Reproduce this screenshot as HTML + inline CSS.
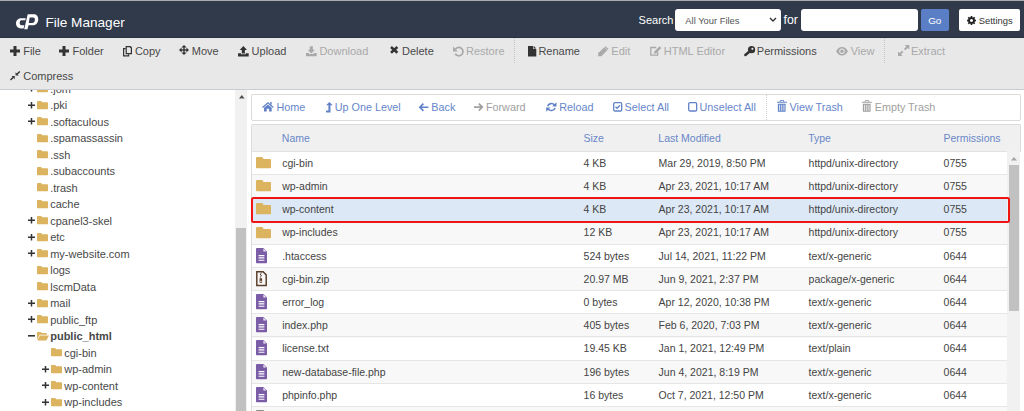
<!DOCTYPE html>
<html><head><meta charset="utf-8">
<style>
*{box-sizing:border-box}
html,body{margin:0;padding:0}
body{width:1024px;height:411px;overflow:hidden;position:relative;background:#fff;font-family:"Liberation Sans",sans-serif;color:#333}
.a{position:absolute}
.t{position:absolute;white-space:nowrap;line-height:1}
.ic{position:absolute;overflow:visible}
#tree{position:absolute;left:0;top:90px;width:235px;height:321px;overflow:hidden}
#tree > *{margin-top:-90px}
</style></head><body>
<div class="a" style="left:0px;top:0px;width:1024px;height:1px;background:#aaabae"></div>
<div class="a" style="left:0px;top:1px;width:1024px;height:37px;background:#303a4b"></div>
<div class="a" style="left:0px;top:37px;width:1024px;height:1px;background:#283041"></div>
<svg class="ic" style="left:12px;top:10px" width="30" height="22" viewBox="0 0 30 22"><path fill="#fff" d="M13.75 8.2L9 8.2C6 8.2 4 10.6 4 13.35C4 16.2 6 18.5 9 18.5L11.6 18.5L12.35 15.3L9.3 15.3C8.2 15.3 7.7 14.2 7.7 12.75C7.7 11.1 8.3 10.2 9.4 10.2L13.3 10.2Z"/><path fill="#fff" fill-rule="evenodd" d="M15.7 4.2L22.2 4.2C24.8 4.2 26.25 6.6 26.25 9.4C26.25 12.8 23.8 15.3 20.5 15.3L16.5 15.3L15.45 19.3L12.2 19.3Z M17.7 7.6L21.3 7.6C22.5 7.6 22.9 8.6 22.9 9.8C22.9 11.7 21.8 13.0 20.2 13.0L16.75 13.0Z"/></svg>
<div class="t" style="left:45.40px;top:16.09px;font-size:13.6px;color:#fff;font-weight:400;">File Manager</div>
<div class="t" style="left:638.60px;top:14.69px;font-size:11.0px;color:#fff;font-weight:400;">Search</div>
<div class="a" style="left:675px;top:9px;width:106px;height:22px;background:#fff;border-radius:3px"></div>
<div class="t" style="left:685.30px;top:16.04px;font-size:9.4px;color:#555;font-weight:400;">All Your Files</div>
<svg class="ic" style="left:768.5px;top:17px" width="8" height="6" viewBox="0 0 8 6"><path d="M1 1 L4 4 L7 1" stroke="#333" stroke-width="1.4" fill="none"/></svg>
<div class="t" style="left:783.60px;top:13.59px;font-size:12.3px;color:#fff;font-weight:400;">for</div>
<div class="a" style="left:801px;top:9px;width:117px;height:22px;background:#fff;border-radius:3px"></div>
<div class="a" style="left:921px;top:9px;width:28px;height:22px;background:#5b7fc6;border-radius:2px"></div>
<div class="t" style="left:928.20px;top:15.82px;font-size:9.9px;color:#fff;font-weight:400;">Go</div>
<div class="a" style="left:959px;top:9px;width:61px;height:22px;background:#fff;border-radius:2px"></div>
<svg class="ic" style="left:967px;top:16px" width="9" height="9" viewBox="0 0 16 16"><path fill="#222" fill-rule="evenodd" d="M6.7 0h2.6l.4 2.1 1.2.5 1.8-1.2 1.9 1.9-1.2 1.8.5 1.2 2.1.4v2.6l-2.1.4-.5 1.2 1.2 1.8-1.9 1.9-1.8-1.2-1.2.5-.4 2.1H6.7l-.4-2.1-1.2-.5-1.8 1.2-1.9-1.9 1.2-1.8-.5-1.2L0 9.3V6.7l2.1-.4.5-1.2-1.2-1.8 1.9-1.9 1.8 1.2 1.2-.5z M8 5.3a2.7 2.7 0 1 0 .01 0z"/></svg>
<div class="t" style="left:978.80px;top:16.24px;font-size:9.4px;color:#333;font-weight:400;">Settings</div>
<div class="a" style="left:0px;top:38px;width:1024px;height:51px;background:#e8e8e8"></div>
<div class="a" style="left:0px;top:89px;width:1024px;height:1px;background:#c8cdd2"></div>
<div class="t" style="left:23.20px;top:46.19px;font-size:11px;color:#484848;font-weight:400;">File</div>
<div class="t" style="left:72.50px;top:46.19px;font-size:11px;color:#484848;font-weight:400;">Folder</div>
<div class="t" style="left:134.90px;top:46.19px;font-size:11px;color:#484848;font-weight:400;">Copy</div>
<div class="t" style="left:191.80px;top:46.19px;font-size:11px;color:#484848;font-weight:400;">Move</div>
<div class="t" style="left:251.60px;top:46.19px;font-size:11px;color:#484848;font-weight:400;">Upload</div>
<div class="t" style="left:319.40px;top:46.19px;font-size:11px;color:#a9a9a9;font-weight:400;">Download</div>
<div class="t" style="left:402.00px;top:46.19px;font-size:11px;color:#484848;font-weight:400;">Delete</div>
<div class="t" style="left:466.00px;top:46.19px;font-size:11px;color:#a9a9a9;font-weight:400;">Restore</div>
<div class="t" style="left:538.40px;top:46.19px;font-size:11px;color:#484848;font-weight:400;">Rename</div>
<div class="t" style="left:611.30px;top:46.19px;font-size:11px;color:#a9a9a9;font-weight:400;">Edit</div>
<div class="t" style="left:663.80px;top:46.19px;font-size:11px;color:#a9a9a9;font-weight:400;">HTML Editor</div>
<div class="t" style="left:756.80px;top:46.19px;font-size:11px;color:#484848;font-weight:400;">Permissions</div>
<div class="t" style="left:850.70px;top:46.19px;font-size:11px;color:#a9a9a9;font-weight:400;">View</div>
<div class="t" style="left:910.90px;top:46.19px;font-size:11px;color:#a9a9a9;font-weight:400;">Extract</div>
<div class="t" style="left:23.20px;top:70.89px;font-size:11px;color:#484848;font-weight:400;">Compress</div>
<div class="a" style="left:514px;top:38px;width:1px;height:25px;border-left:1px dotted #c4c4c4"></div>
<div class="a" style="left:884px;top:38px;width:1px;height:25px;border-left:1px dotted #c4c4c4"></div>
<svg class="ic" style="left:9.7px;top:45.9px" width="10" height="10" viewBox="0 0 10 10"><path fill="#333" d="M3.5 0h3v3.5H10v3H6.5V10h-3V6.5H0v-3h3.5z"/></svg>
<svg class="ic" style="left:59.2px;top:45.9px" width="10" height="10" viewBox="0 0 10 10"><path fill="#333" d="M3.5 0h3v3.5H10v3H6.5V10h-3V6.5H0v-3h3.5z"/></svg>
<svg class="ic" style="left:123px;top:45.5px" width="9" height="10.5" viewBox="0 0 9 10.5"><g fill="none" stroke="#333" stroke-width="1.2"><path d="M2.6 2.6H0.6V9.9H5.6V8.3"/><path d="M3.2 0.6H7L8.4 2V7.7H3.2Z"/></g><path fill="#333" d="M6.6 0.6H8.4V2.4Z"/></svg>
<svg class="ic" style="left:179px;top:45.3px" width="10" height="10" viewBox="0 0 10 10"><g fill="#333"><path d="M5 0L7.6 2.6H2.4Z M5 10L7.6 7.4H2.4Z M0 5L2.6 2.4V7.6Z M10 5L7.4 2.4V7.6Z"/><rect x="4.3" y="2" width="1.4" height="6"/><rect x="2" y="4.3" width="6" height="1.4"/></g></svg>
<svg class="ic" style="left:238.2px;top:45.5px" width="10.7" height="10.5" viewBox="0 0 10.7 10.5"><g fill="#333"><path d="M5.35 0L9 3.9H6.9V7.4H3.8V3.9H1.7Z"/><path d="M0 7.2H3V8.3H7.7V7.2H10.7V10.5H0Z"/></g></svg>
<svg class="ic" style="left:306.2px;top:45.8px" width="10.7" height="10.3" viewBox="0 0 10.7 10.3"><g fill="#a9a9a9"><path d="M5.35 7.6L9 3.7H6.9V0.2H3.8V3.7H1.7Z"/><path d="M0 7H3V8.1H7.7V7H10.7V10.3H0Z"/></g></svg>
<svg class="ic" style="left:389.9px;top:46.2px" width="8.4" height="7.8" viewBox="0 0 8.4 7.8"><path stroke="#333" stroke-width="2.5" d="M1 1L7.4 6.8M7.4 1L1 6.8"/></svg>
<svg class="ic" style="left:453.2px;top:45.5px" width="10.2" height="10.2" viewBox="0 0 10.2 10.2"><path fill="none" stroke="#a9a9a9" stroke-width="1.7" d="M2.4 3.2A4.2 4.2 0 1 1 2.2 7.8"/><path fill="#a9a9a9" d="M0 0.6V5.4H4.8Z"/></svg>
<svg class="ic" style="left:527.9px;top:45.6px" width="8.3" height="10.5" viewBox="0 0 8.3 10.5"><path fill="#333" d="M0 0H5.2V3.1H8.3V10.5H0Z M5.8 0L8.3 2.5H5.8Z"/></svg>
<svg class="ic" style="left:598.2px;top:45.7px" width="10.7" height="10.3" viewBox="0 0 10.7 10.3"><path fill="#a9a9a9" d="M7.6 0.2L10.5 3.1L3.4 10.2H0.2V7Z"/><path stroke="#e8e8e8" stroke-width="0.6" d="M6.6 1.3L9.4 4.1"/></svg>
<svg class="ic" style="left:650px;top:46.2px" width="11.5" height="9.8" viewBox="0 0 11.5 9.8"><path fill="none" stroke="#a9a9a9" stroke-width="1.3" d="M6.2 1.5H0.8V9.1H7.6V5.6"/><path fill="#a9a9a9" d="M9.6 0.2L11.3 1.9L5.8 7.4H4.1V5.7Z"/></svg>
<svg class="ic" style="left:743.9px;top:45.9px" width="11.2" height="10.3" viewBox="0 0 11.2 10.3"><circle cx="7.6" cy="3.7" r="3.6" fill="#333"/><circle cx="8.4" cy="2.8" r="1.1" fill="#e8e8e8"/><path stroke="#333" stroke-width="2.6" stroke-linecap="round" d="M5.5 5.6L1.4 9"/></svg>
<svg class="ic" style="left:836.3px;top:46.6px" width="12" height="8.5" viewBox="0 0 12 8.5"><path fill="#a9a9a9" fill-rule="evenodd" d="M0 4.25C1.6 1.5 3.6 0 6 0S10.4 1.5 12 4.25C10.4 7 8.4 8.5 6 8.5S1.6 7 0 4.25Z M6 1.4A2.85 2.85 0 1 0 6.01 1.4Z"/><circle cx="6" cy="4.25" r="1.7" fill="#a9a9a9"/></svg>
<svg class="ic" style="left:897.5px;top:44.8px" width="11.3" height="11" viewBox="0 0 11.3 11"><g fill="#a9a9a9"><path d="M11.3 0V4.6L6.7 0Z"/><path stroke="#a9a9a9" stroke-width="2" d="M9.6 1.7L6.6 4.6"/><path d="M0 11V6.4L4.6 11Z"/><path stroke="#a9a9a9" stroke-width="2" d="M1.7 9.3L4.7 6.4"/></g></svg>
<svg class="ic" style="left:9.8px;top:71px" width="10.3" height="9.6" viewBox="0 0 10.3 9.6"><g fill="#333"><path d="M4.75 5.1H1.55L4.75 8.3Z"/><path stroke="#333" stroke-width="1.4" d="M0.5 9.1L3.3 6.3"/><path d="M5.55 4.5H8.75L5.55 1.3Z"/><path stroke="#333" stroke-width="1.4" d="M9.8 0.5L7 3.3"/></g></svg>
<div id="tree"><div class="a" style="left:0;top:0;width:235px;height:411px">
<svg class="ic" style="left:28.10px;top:85.30px" width="7" height="6.6" viewBox="0 0 7 6.6"><path fill="#333" d="M2.75 0h1.5v2.55H7v1.5H4.25v2.55h-1.5V4.05H0v-1.5h2.75z"/></svg>
<svg class="ic" style="left:36.90px;top:84.10px" width="11" height="8.3" viewBox="0 0 11 8.3"><path fill="#dcb35e" d="M0 0.7Q0 0 0.7 0H4.2L5.2 1.3H10.3Q11 1.3 11 2V7.6Q11 8.3 10.3 8.3H0.7Q0 8.3 0 7.6Z"/></svg>
<div class="t" style="left:50.20px;top:83.99px;font-size:11.0px;color:#484848;font-weight:400">.jom</div>
<svg class="ic" style="left:28.10px;top:101.80px" width="7" height="6.6" viewBox="0 0 7 6.6"><path fill="#333" d="M2.75 0h1.5v2.55H7v1.5H4.25v2.55h-1.5V4.05H0v-1.5h2.75z"/></svg>
<svg class="ic" style="left:36.90px;top:100.60px" width="11" height="8.3" viewBox="0 0 11 8.3"><path fill="#dcb35e" d="M0 0.7Q0 0 0.7 0H4.2L5.2 1.3H10.3Q11 1.3 11 2V7.6Q11 8.3 10.3 8.3H0.7Q0 8.3 0 7.6Z"/></svg>
<div class="t" style="left:50.20px;top:100.49px;font-size:11.0px;color:#484848;font-weight:400">.pki</div>
<svg class="ic" style="left:28.10px;top:118.30px" width="7" height="6.6" viewBox="0 0 7 6.6"><path fill="#333" d="M2.75 0h1.5v2.55H7v1.5H4.25v2.55h-1.5V4.05H0v-1.5h2.75z"/></svg>
<svg class="ic" style="left:36.90px;top:117.10px" width="11" height="8.3" viewBox="0 0 11 8.3"><path fill="#dcb35e" d="M0 0.7Q0 0 0.7 0H4.2L5.2 1.3H10.3Q11 1.3 11 2V7.6Q11 8.3 10.3 8.3H0.7Q0 8.3 0 7.6Z"/></svg>
<div class="t" style="left:50.20px;top:116.99px;font-size:11.0px;color:#484848;font-weight:400">.softaculous</div>
<svg class="ic" style="left:36.90px;top:133.60px" width="11" height="8.3" viewBox="0 0 11 8.3"><path fill="#dcb35e" d="M0 0.7Q0 0 0.7 0H4.2L5.2 1.3H10.3Q11 1.3 11 2V7.6Q11 8.3 10.3 8.3H0.7Q0 8.3 0 7.6Z"/></svg>
<div class="t" style="left:50.20px;top:133.49px;font-size:11.0px;color:#484848;font-weight:400">.spamassassin</div>
<svg class="ic" style="left:36.90px;top:150.10px" width="11" height="8.3" viewBox="0 0 11 8.3"><path fill="#dcb35e" d="M0 0.7Q0 0 0.7 0H4.2L5.2 1.3H10.3Q11 1.3 11 2V7.6Q11 8.3 10.3 8.3H0.7Q0 8.3 0 7.6Z"/></svg>
<div class="t" style="left:50.20px;top:149.99px;font-size:11.0px;color:#484848;font-weight:400">.ssh</div>
<svg class="ic" style="left:36.90px;top:166.60px" width="11" height="8.3" viewBox="0 0 11 8.3"><path fill="#dcb35e" d="M0 0.7Q0 0 0.7 0H4.2L5.2 1.3H10.3Q11 1.3 11 2V7.6Q11 8.3 10.3 8.3H0.7Q0 8.3 0 7.6Z"/></svg>
<div class="t" style="left:50.20px;top:166.49px;font-size:11.0px;color:#484848;font-weight:400">.subaccounts</div>
<svg class="ic" style="left:36.90px;top:183.10px" width="11" height="8.3" viewBox="0 0 11 8.3"><path fill="#dcb35e" d="M0 0.7Q0 0 0.7 0H4.2L5.2 1.3H10.3Q11 1.3 11 2V7.6Q11 8.3 10.3 8.3H0.7Q0 8.3 0 7.6Z"/></svg>
<div class="t" style="left:50.20px;top:182.99px;font-size:11.0px;color:#484848;font-weight:400">.trash</div>
<svg class="ic" style="left:36.90px;top:199.60px" width="11" height="8.3" viewBox="0 0 11 8.3"><path fill="#dcb35e" d="M0 0.7Q0 0 0.7 0H4.2L5.2 1.3H10.3Q11 1.3 11 2V7.6Q11 8.3 10.3 8.3H0.7Q0 8.3 0 7.6Z"/></svg>
<div class="t" style="left:50.20px;top:199.49px;font-size:11.0px;color:#484848;font-weight:400">cache</div>
<svg class="ic" style="left:28.10px;top:217.30px" width="7" height="6.6" viewBox="0 0 7 6.6"><path fill="#333" d="M2.75 0h1.5v2.55H7v1.5H4.25v2.55h-1.5V4.05H0v-1.5h2.75z"/></svg>
<svg class="ic" style="left:36.90px;top:216.10px" width="11" height="8.3" viewBox="0 0 11 8.3"><path fill="#dcb35e" d="M0 0.7Q0 0 0.7 0H4.2L5.2 1.3H10.3Q11 1.3 11 2V7.6Q11 8.3 10.3 8.3H0.7Q0 8.3 0 7.6Z"/></svg>
<div class="t" style="left:50.20px;top:215.99px;font-size:11.0px;color:#484848;font-weight:400">cpanel3-skel</div>
<svg class="ic" style="left:28.10px;top:233.80px" width="7" height="6.6" viewBox="0 0 7 6.6"><path fill="#333" d="M2.75 0h1.5v2.55H7v1.5H4.25v2.55h-1.5V4.05H0v-1.5h2.75z"/></svg>
<svg class="ic" style="left:36.90px;top:232.60px" width="11" height="8.3" viewBox="0 0 11 8.3"><path fill="#dcb35e" d="M0 0.7Q0 0 0.7 0H4.2L5.2 1.3H10.3Q11 1.3 11 2V7.6Q11 8.3 10.3 8.3H0.7Q0 8.3 0 7.6Z"/></svg>
<div class="t" style="left:50.20px;top:232.49px;font-size:11.0px;color:#484848;font-weight:400">etc</div>
<svg class="ic" style="left:28.10px;top:250.30px" width="7" height="6.6" viewBox="0 0 7 6.6"><path fill="#333" d="M2.75 0h1.5v2.55H7v1.5H4.25v2.55h-1.5V4.05H0v-1.5h2.75z"/></svg>
<svg class="ic" style="left:36.90px;top:249.10px" width="11" height="8.3" viewBox="0 0 11 8.3"><path fill="#dcb35e" d="M0 0.7Q0 0 0.7 0H4.2L5.2 1.3H10.3Q11 1.3 11 2V7.6Q11 8.3 10.3 8.3H0.7Q0 8.3 0 7.6Z"/></svg>
<div class="t" style="left:50.20px;top:248.99px;font-size:11.0px;color:#484848;font-weight:400">my-website.com</div>
<svg class="ic" style="left:36.90px;top:265.60px" width="11" height="8.3" viewBox="0 0 11 8.3"><path fill="#dcb35e" d="M0 0.7Q0 0 0.7 0H4.2L5.2 1.3H10.3Q11 1.3 11 2V7.6Q11 8.3 10.3 8.3H0.7Q0 8.3 0 7.6Z"/></svg>
<div class="t" style="left:50.20px;top:265.49px;font-size:11.0px;color:#484848;font-weight:400">logs</div>
<svg class="ic" style="left:36.90px;top:282.10px" width="11" height="8.3" viewBox="0 0 11 8.3"><path fill="#dcb35e" d="M0 0.7Q0 0 0.7 0H4.2L5.2 1.3H10.3Q11 1.3 11 2V7.6Q11 8.3 10.3 8.3H0.7Q0 8.3 0 7.6Z"/></svg>
<div class="t" style="left:50.20px;top:281.99px;font-size:11.0px;color:#484848;font-weight:400">lscmData</div>
<svg class="ic" style="left:28.10px;top:299.80px" width="7" height="6.6" viewBox="0 0 7 6.6"><path fill="#333" d="M2.75 0h1.5v2.55H7v1.5H4.25v2.55h-1.5V4.05H0v-1.5h2.75z"/></svg>
<svg class="ic" style="left:36.90px;top:298.60px" width="11" height="8.3" viewBox="0 0 11 8.3"><path fill="#dcb35e" d="M0 0.7Q0 0 0.7 0H4.2L5.2 1.3H10.3Q11 1.3 11 2V7.6Q11 8.3 10.3 8.3H0.7Q0 8.3 0 7.6Z"/></svg>
<div class="t" style="left:50.20px;top:298.49px;font-size:11.0px;color:#484848;font-weight:400">mail</div>
<svg class="ic" style="left:28.10px;top:316.30px" width="7" height="6.6" viewBox="0 0 7 6.6"><path fill="#333" d="M2.75 0h1.5v2.55H7v1.5H4.25v2.55h-1.5V4.05H0v-1.5h2.75z"/></svg>
<svg class="ic" style="left:36.90px;top:315.10px" width="11" height="8.3" viewBox="0 0 11 8.3"><path fill="#dcb35e" d="M0 0.7Q0 0 0.7 0H4.2L5.2 1.3H10.3Q11 1.3 11 2V7.6Q11 8.3 10.3 8.3H0.7Q0 8.3 0 7.6Z"/></svg>
<div class="t" style="left:50.20px;top:314.99px;font-size:11.0px;color:#484848;font-weight:400">public_ftp</div>
<svg class="ic" style="left:28.10px;top:335.40px" width="7" height="1.6" viewBox="0 0 7 1.6"><rect width="7" height="1.6" fill="#333"/></svg>
<svg class="ic" style="left:36.90px;top:331.60px" width="12" height="8.4" viewBox="0 0 12 8.4"><path fill="#dcb35e" d="M0 0.6Q0 0 0.6 0H3.8L4.8 1H9.2Q9.8 1 9.8 1.6V2.8H2.6L0 7.8Z"/><path fill="#dcb35e" d="M2.9 3.6H12L9.4 8.4H0.3Z"/></svg>
<div class="t" style="left:50.20px;top:331.49px;font-size:11.0px;color:#484848;font-weight:700">public_html</div>
<svg class="ic" style="left:50.90px;top:348.10px" width="11" height="8.3" viewBox="0 0 11 8.3"><path fill="#dcb35e" d="M0 0.7Q0 0 0.7 0H4.2L5.2 1.3H10.3Q11 1.3 11 2V7.6Q11 8.3 10.3 8.3H0.7Q0 8.3 0 7.6Z"/></svg>
<div class="t" style="left:64.20px;top:347.99px;font-size:11.0px;color:#484848;font-weight:400">cgi-bin</div>
<svg class="ic" style="left:42.10px;top:365.80px" width="7" height="6.6" viewBox="0 0 7 6.6"><path fill="#333" d="M2.75 0h1.5v2.55H7v1.5H4.25v2.55h-1.5V4.05H0v-1.5h2.75z"/></svg>
<svg class="ic" style="left:50.90px;top:364.60px" width="11" height="8.3" viewBox="0 0 11 8.3"><path fill="#dcb35e" d="M0 0.7Q0 0 0.7 0H4.2L5.2 1.3H10.3Q11 1.3 11 2V7.6Q11 8.3 10.3 8.3H0.7Q0 8.3 0 7.6Z"/></svg>
<div class="t" style="left:64.20px;top:364.49px;font-size:11.0px;color:#484848;font-weight:400">wp-admin</div>
<svg class="ic" style="left:42.10px;top:382.30px" width="7" height="6.6" viewBox="0 0 7 6.6"><path fill="#333" d="M2.75 0h1.5v2.55H7v1.5H4.25v2.55h-1.5V4.05H0v-1.5h2.75z"/></svg>
<svg class="ic" style="left:50.90px;top:381.10px" width="11" height="8.3" viewBox="0 0 11 8.3"><path fill="#dcb35e" d="M0 0.7Q0 0 0.7 0H4.2L5.2 1.3H10.3Q11 1.3 11 2V7.6Q11 8.3 10.3 8.3H0.7Q0 8.3 0 7.6Z"/></svg>
<div class="t" style="left:64.20px;top:380.99px;font-size:11.0px;color:#484848;font-weight:400">wp-content</div>
<svg class="ic" style="left:42.10px;top:398.80px" width="7" height="6.6" viewBox="0 0 7 6.6"><path fill="#333" d="M2.75 0h1.5v2.55H7v1.5H4.25v2.55h-1.5V4.05H0v-1.5h2.75z"/></svg>
<svg class="ic" style="left:50.90px;top:397.60px" width="11" height="8.3" viewBox="0 0 11 8.3"><path fill="#dcb35e" d="M0 0.7Q0 0 0.7 0H4.2L5.2 1.3H10.3Q11 1.3 11 2V7.6Q11 8.3 10.3 8.3H0.7Q0 8.3 0 7.6Z"/></svg>
<div class="t" style="left:64.20px;top:397.49px;font-size:11.0px;color:#484848;font-weight:400">wp-includes</div>
</div></div>
<div class="a" style="left:235px;top:90px;width:12px;height:321px;background:#f1f1f1"></div>
<svg class="ic" style="left:238.6px;top:94.9px" width="5.6" height="3.5" viewBox="0 0 5.6 3.5"><path fill="#505050" d="M2.8 0L5.6 3.5H0Z"/></svg>
<div class="a" style="left:236px;top:228px;width:10px;height:190px;background:#c1c1c1"></div>
<div class="a" style="left:251px;top:94px;width:770px;height:27px;background:#fff;border:1px solid #dcdcdc;border-radius:2px"></div>
<div class="t" style="left:276.40px;top:102.16px;font-size:10.8px;color:#6686ca;font-weight:400">Home</div>
<div class="t" style="left:334.70px;top:102.16px;font-size:10.8px;color:#6686ca;font-weight:400">Up One Level</div>
<div class="t" style="left:431.30px;top:102.16px;font-size:10.8px;color:#6686ca;font-weight:400">Back</div>
<div class="t" style="left:485.90px;top:102.16px;font-size:10.8px;color:#a0a0a0;font-weight:400">Forward</div>
<div class="t" style="left:559.30px;top:102.16px;font-size:10.8px;color:#6686ca;font-weight:400">Reload</div>
<div class="t" style="left:624.60px;top:102.16px;font-size:10.8px;color:#6686ca;font-weight:400">Select All</div>
<div class="t" style="left:699.50px;top:102.16px;font-size:10.8px;color:#6686ca;font-weight:400">Unselect All</div>
<div class="t" style="left:789.60px;top:102.16px;font-size:10.8px;color:#6686ca;font-weight:400">View Trash</div>
<div class="t" style="left:874.70px;top:102.16px;font-size:10.8px;color:#a0a0a0;font-weight:400">Empty Trash</div>
<div class="a" style="left:766px;top:95px;width:1px;height:25px;border-left:1px dotted #cfcfcf"></div>
<svg class="ic" style="left:262.00px;top:102.40px" width="11.8" height="9.6" viewBox="0 0 11.8 9.6"><path fill="#6282c8" d="M2 5.7L5.9 2.5L9.7 5.7V9.5H7.1V6.7H4.7V9.5H2Z"/><path fill="none" stroke="#6282c8" stroke-width="1.3" d="M0.5 5.5L5.9 0.8L11.3 5.5"/><rect x="8.2" y="0" width="1.5" height="2.7" fill="#6282c8"/></svg>
<svg class="ic" style="left:325.90px;top:101.90px" width="6.7" height="10.4" viewBox="0 0 6.7 10.4"><path fill="#6282c8" d="M3.4 0L6.7 3.3H4.5V10.4H0V8.6H2.4V3.3H0.1Z"/></svg>
<svg class="ic" style="left:419.30px;top:103.00px" width="9.4" height="8.5" viewBox="0 0 9.4 8.5"><path fill="none" stroke="#6282c8" stroke-width="1.7" d="M4.4 0.6L0.9 4.25L4.4 7.9M1.2 4.25H9.4"/></svg>
<svg class="ic" style="left:474.00px;top:103.00px" width="9.2" height="8.2" viewBox="0 0 9.2 8.2"><path fill="none" stroke="#a0a0a0" stroke-width="1.7" d="M4.8 0.6L8.3 4.1L4.8 7.6M0 4.1H8"/></svg>
<svg class="ic" style="left:546.10px;top:101.90px" width="10.7" height="10.1" viewBox="0 0 10.7 10.1"><path fill="none" stroke="#6282c8" stroke-width="1.6" d="M1.6 4.2A4 4 0 0 1 8.6 3.2 M9.1 5.9A4 4 0 0 1 2.1 6.9"/><path fill="#6282c8" d="M10.5 0.3V4.6H6.2Z M0.2 9.8V5.5H4.5Z"/></svg>
<svg class="ic" style="left:612.50px;top:102.10px" width="9.4" height="9.7" viewBox="0 0 9.4 9.7"><rect x="0.7" y="0.7" width="8" height="8.3" rx="1.3" fill="none" stroke="#6282c8" stroke-width="1.3"/><path fill="none" stroke="#6282c8" stroke-width="1.3" d="M2.5 4.8L4.1 6.3L7 3.3"/></svg>
<svg class="ic" style="left:687.50px;top:102.10px" width="9.4" height="9.7" viewBox="0 0 9.4 9.7"><rect x="0.7" y="0.7" width="8" height="8.3" rx="1.3" fill="none" stroke="#6282c8" stroke-width="1.3"/></svg>
<svg class="ic" style="left:777.30px;top:100.00px" width="9.9" height="11.8" viewBox="0 0 9.9 11.8"><path fill="#6282c8" d="M0 1.85H9.9V2.75H0Z M0.85 3.75H8.6V11.8H0.85Z"/><path fill="none" stroke="#6282c8" stroke-width="0.9" d="M3.1 1.9L3.4 0.45H6.5L6.8 1.9"/><path fill="#fff" opacity="0.75" d="M2 4.7H3.1V10.8H2Z M4.2 4.7H5.3V10.8H4.2Z M6.4 4.7H7.5V10.8H6.4Z"/></svg>
<svg class="ic" style="left:862.30px;top:100.00px" width="9.9" height="11.8" viewBox="0 0 9.9 11.8"><path fill="#a0a0a0" d="M0 1.85H9.9V2.75H0Z M0.85 3.75H8.6V11.8H0.85Z"/><path fill="none" stroke="#a0a0a0" stroke-width="0.9" d="M3.1 1.9L3.4 0.45H6.5L6.8 1.9"/><path fill="#fff" opacity="0.75" d="M2 4.7H3.1V10.8H2Z M4.2 4.7H5.3V10.8H4.2Z M6.4 4.7H7.5V10.8H6.4Z"/></svg>
<div class="a" style="left:251px;top:124px;width:770px;height:28px;background:#f0f0f0;border:1px solid #dcdcdc;border-bottom-color:#e2e2e2;border-radius:2px 2px 0 0"></div>
<div class="t" style="left:281.80px;top:132.81px;font-size:10.5px;color:#6a87c8;font-weight:400">Name</div>
<div class="t" style="left:583.40px;top:132.81px;font-size:10.5px;color:#6a87c8;font-weight:400">Size</div>
<div class="t" style="left:658.30px;top:132.81px;font-size:10.5px;color:#6a87c8;font-weight:400">Last Modified</div>
<div class="t" style="left:808.20px;top:132.81px;font-size:10.5px;color:#6a87c8;font-weight:400">Type</div>
<div class="t" style="left:943.40px;top:132.81px;font-size:10.5px;color:#6a87c8;font-weight:400">Permissions</div>
<div class="a" style="left:251px;top:152px;width:757px;height:259px;overflow:hidden;border-left:1px solid #dcdcdc"><div class="a" style="left:0;top:0.00px;width:756px;height:23.70px;background:#fff"></div><div class="a" style="left:0;top:23.20px;width:756px;height:23.70px;background:#f8f8f8"></div><div class="a" style="left:0;top:46.40px;width:756px;height:23.70px;background:#fff"></div><div class="a" style="left:0;top:69.60px;width:756px;height:23.70px;background:#f8f8f8"></div><div class="a" style="left:0;top:92.80px;width:756px;height:23.70px;background:#fff"></div><div class="a" style="left:0;top:116.00px;width:756px;height:23.70px;background:#f8f8f8"></div><div class="a" style="left:0;top:139.20px;width:756px;height:23.70px;background:#fff"></div><div class="a" style="left:0;top:162.40px;width:756px;height:23.70px;background:#f8f8f8"></div><div class="a" style="left:0;top:185.60px;width:756px;height:23.70px;background:#fff"></div><div class="a" style="left:0;top:208.80px;width:756px;height:23.70px;background:#f8f8f8"></div><div class="a" style="left:0;top:232.00px;width:756px;height:23.70px;background:#fff"></div><div class="a" style="left:0;top:255.20px;width:756px;height:23.70px;background:#f8f8f8"></div><div class="a" style="left:0;top:22px;width:756px;height:1px;background:#e6e6e6"></div><div class="a" style="left:0;top:45px;width:756px;height:1px;background:#e6e6e6"></div><div class="a" style="left:0;top:68px;width:756px;height:1px;background:#e6e6e6"></div><div class="a" style="left:0;top:92px;width:756px;height:1px;background:#e6e6e6"></div><div class="a" style="left:0;top:115px;width:756px;height:1px;background:#e6e6e6"></div><div class="a" style="left:0;top:138px;width:756px;height:1px;background:#e6e6e6"></div><div class="a" style="left:0;top:161px;width:756px;height:1px;background:#e6e6e6"></div><div class="a" style="left:0;top:184px;width:756px;height:1px;background:#e6e6e6"></div><div class="a" style="left:0;top:208px;width:756px;height:1px;background:#e6e6e6"></div><div class="a" style="left:0;top:231px;width:756px;height:1px;background:#e6e6e6"></div><div class="a" style="left:0;top:254px;width:756px;height:1px;background:#e6e6e6"></div></div>
<div class="a" style="left:252px;top:198px;width:756px;height:23px;background:#dce8f5"></div>
<svg class="ic" style="left:255.70px;top:156.90px" width="15" height="11.3" viewBox="0 0 15 11.3"><path fill="#dcb35e" d="M0 1Q0 0 1 0H6.3L7.6 1.9H14Q15 1.9 15 2.9V10.3Q15 11.3 14 11.3H1Q0 11.3 0 10.3Z"/></svg>
<div class="t" style="left:282.20px;top:157.71px;font-size:10.5px;color:#444;font-weight:400">cgi-bin</div>
<div class="t" style="left:583.60px;top:157.71px;font-size:10.5px;color:#444;font-weight:400">4 KB</div>
<div class="t" style="left:658.60px;top:157.71px;font-size:10.5px;color:#444;font-weight:400">Mar 29, 2019, 8:50 PM</div>
<div class="t" style="left:808.60px;top:157.71px;font-size:10.5px;color:#444;font-weight:400">httpd/unix-directory</div>
<div class="t" style="left:943.60px;top:157.71px;font-size:10.5px;color:#444;font-weight:400">0755</div>
<svg class="ic" style="left:255.70px;top:180.10px" width="15" height="11.3" viewBox="0 0 15 11.3"><path fill="#dcb35e" d="M0 1Q0 0 1 0H6.3L7.6 1.9H14Q15 1.9 15 2.9V10.3Q15 11.3 14 11.3H1Q0 11.3 0 10.3Z"/></svg>
<div class="t" style="left:282.20px;top:180.91px;font-size:10.5px;color:#444;font-weight:400">wp-admin</div>
<div class="t" style="left:583.60px;top:180.91px;font-size:10.5px;color:#444;font-weight:400">4 KB</div>
<div class="t" style="left:658.60px;top:180.91px;font-size:10.5px;color:#444;font-weight:400">Apr 23, 2021, 10:17 AM</div>
<div class="t" style="left:808.60px;top:180.91px;font-size:10.5px;color:#444;font-weight:400">httpd/unix-directory</div>
<div class="t" style="left:943.60px;top:180.91px;font-size:10.5px;color:#444;font-weight:400">0755</div>
<svg class="ic" style="left:255.70px;top:203.30px" width="15" height="11.3" viewBox="0 0 15 11.3"><path fill="#dcb35e" d="M0 1Q0 0 1 0H6.3L7.6 1.9H14Q15 1.9 15 2.9V10.3Q15 11.3 14 11.3H1Q0 11.3 0 10.3Z"/></svg>
<div class="t" style="left:282.20px;top:204.11px;font-size:10.5px;color:#444;font-weight:400">wp-content</div>
<div class="t" style="left:583.60px;top:204.11px;font-size:10.5px;color:#444;font-weight:400">4 KB</div>
<div class="t" style="left:658.60px;top:204.11px;font-size:10.5px;color:#444;font-weight:400">Apr 23, 2021, 10:17 AM</div>
<div class="t" style="left:808.60px;top:204.11px;font-size:10.5px;color:#444;font-weight:400">httpd/unix-directory</div>
<div class="t" style="left:943.60px;top:204.11px;font-size:10.5px;color:#444;font-weight:400">0755</div>
<svg class="ic" style="left:255.70px;top:226.50px" width="15" height="11.3" viewBox="0 0 15 11.3"><path fill="#dcb35e" d="M0 1Q0 0 1 0H6.3L7.6 1.9H14Q15 1.9 15 2.9V10.3Q15 11.3 14 11.3H1Q0 11.3 0 10.3Z"/></svg>
<div class="t" style="left:282.20px;top:227.31px;font-size:10.5px;color:#444;font-weight:400">wp-includes</div>
<div class="t" style="left:583.60px;top:227.31px;font-size:10.5px;color:#444;font-weight:400">12 KB</div>
<div class="t" style="left:658.60px;top:227.31px;font-size:10.5px;color:#444;font-weight:400">Apr 23, 2021, 10:17 AM</div>
<div class="t" style="left:808.60px;top:227.31px;font-size:10.5px;color:#444;font-weight:400">httpd/unix-directory</div>
<div class="t" style="left:943.60px;top:227.31px;font-size:10.5px;color:#444;font-weight:400">0755</div>
<svg class="ic" style="left:256.10px;top:247.50px" width="11" height="15.2" viewBox="0 0 11 15.2"><path fill="#7a5da6" d="M0.8 0H7.4L11 3.6V14.4Q11 15.2 10.2 15.2H0.8Q0 15.2 0 14.4V0.8Q0 0 0.8 0Z"/><path fill="#fff" d="M7.4 0.6V3.6H10.4Z" opacity="0.85"/><path stroke="#fff" stroke-width="1.1" d="M2.6 7.6H8.4M2.6 9.9H8.4M2.6 12.2H8.4"/></svg>
<div class="t" style="left:282.20px;top:250.51px;font-size:10.5px;color:#444;font-weight:400">.htaccess</div>
<div class="t" style="left:583.60px;top:250.51px;font-size:10.5px;color:#444;font-weight:400">524 bytes</div>
<div class="t" style="left:658.60px;top:250.51px;font-size:10.5px;color:#444;font-weight:400">Jul 14, 2021, 11:22 PM</div>
<div class="t" style="left:808.60px;top:250.51px;font-size:10.5px;color:#444;font-weight:400">text/x-generic</div>
<div class="t" style="left:943.60px;top:250.51px;font-size:10.5px;color:#444;font-weight:400">0644</div>
<svg class="ic" style="left:256.10px;top:270.70px" width="11" height="15.2" viewBox="0 0 11 15.2"><path fill="none" stroke="#5b3f2c" stroke-width="1.5" d="M1.3 0.8H7.1L10.2 3.9V14.4H0.8V0.8Z"/><path fill="#5b3f2c" d="M4.7 1.5H5.8V2.6H4.7Z M3.9 2.8H5V3.9H3.9Z M4.7 4.1H5.8V5.2H4.7Z M3.9 5.4H5V6.5H3.9Z M3.6 7.2H6.1V11.8H3.6Z"/><rect x="4.3" y="9.8" width="1.2" height="1.2" fill="#fff"/></svg>
<div class="t" style="left:282.20px;top:273.71px;font-size:10.5px;color:#444;font-weight:400">cgi-bin.zip</div>
<div class="t" style="left:583.60px;top:273.71px;font-size:10.5px;color:#444;font-weight:400">20.97 MB</div>
<div class="t" style="left:658.60px;top:273.71px;font-size:10.5px;color:#444;font-weight:400">Jun 9, 2021, 2:37 PM</div>
<div class="t" style="left:808.60px;top:273.71px;font-size:10.5px;color:#444;font-weight:400">package/x-generic</div>
<div class="t" style="left:943.60px;top:273.71px;font-size:10.5px;color:#444;font-weight:400">0644</div>
<svg class="ic" style="left:256.10px;top:293.90px" width="11" height="15.2" viewBox="0 0 11 15.2"><path fill="#7a5da6" d="M0.8 0H7.4L11 3.6V14.4Q11 15.2 10.2 15.2H0.8Q0 15.2 0 14.4V0.8Q0 0 0.8 0Z"/><path fill="#fff" d="M7.4 0.6V3.6H10.4Z" opacity="0.85"/><path stroke="#fff" stroke-width="1.1" d="M2.6 7.6H8.4M2.6 9.9H8.4M2.6 12.2H8.4"/></svg>
<div class="t" style="left:282.20px;top:296.91px;font-size:10.5px;color:#444;font-weight:400">error_log</div>
<div class="t" style="left:583.60px;top:296.91px;font-size:10.5px;color:#444;font-weight:400">0 bytes</div>
<div class="t" style="left:658.60px;top:296.91px;font-size:10.5px;color:#444;font-weight:400">Apr 12, 2020, 10:38 PM</div>
<div class="t" style="left:808.60px;top:296.91px;font-size:10.5px;color:#444;font-weight:400">text/x-generic</div>
<div class="t" style="left:943.60px;top:296.91px;font-size:10.5px;color:#444;font-weight:400">0644</div>
<svg class="ic" style="left:256.10px;top:317.10px" width="11" height="15.2" viewBox="0 0 11 15.2"><path fill="#7a5da6" d="M0.8 0H7.4L11 3.6V14.4Q11 15.2 10.2 15.2H0.8Q0 15.2 0 14.4V0.8Q0 0 0.8 0Z"/><path fill="#fff" d="M7.4 0.6V3.6H10.4Z" opacity="0.85"/><path stroke="#fff" stroke-width="1.1" d="M2.6 7.6H8.4M2.6 9.9H8.4M2.6 12.2H8.4"/></svg>
<div class="t" style="left:282.20px;top:320.11px;font-size:10.5px;color:#444;font-weight:400">index.php</div>
<div class="t" style="left:583.60px;top:320.11px;font-size:10.5px;color:#444;font-weight:400">405 bytes</div>
<div class="t" style="left:658.60px;top:320.11px;font-size:10.5px;color:#444;font-weight:400">Feb 6, 2020, 7:03 PM</div>
<div class="t" style="left:808.60px;top:320.11px;font-size:10.5px;color:#444;font-weight:400">text/x-generic</div>
<div class="t" style="left:943.60px;top:320.11px;font-size:10.5px;color:#444;font-weight:400">0644</div>
<svg class="ic" style="left:256.10px;top:340.30px" width="11" height="15.2" viewBox="0 0 11 15.2"><path fill="#7a5da6" d="M0.8 0H7.4L11 3.6V14.4Q11 15.2 10.2 15.2H0.8Q0 15.2 0 14.4V0.8Q0 0 0.8 0Z"/><path fill="#fff" d="M7.4 0.6V3.6H10.4Z" opacity="0.85"/><path stroke="#fff" stroke-width="1.1" d="M2.6 7.6H8.4M2.6 9.9H8.4M2.6 12.2H8.4"/></svg>
<div class="t" style="left:282.20px;top:343.31px;font-size:10.5px;color:#444;font-weight:400">license.txt</div>
<div class="t" style="left:583.60px;top:343.31px;font-size:10.5px;color:#444;font-weight:400">19.45 KB</div>
<div class="t" style="left:658.60px;top:343.31px;font-size:10.5px;color:#444;font-weight:400">Jan 1, 2021, 12:49 PM</div>
<div class="t" style="left:808.60px;top:343.31px;font-size:10.5px;color:#444;font-weight:400">text/plain</div>
<div class="t" style="left:943.60px;top:343.31px;font-size:10.5px;color:#444;font-weight:400">0644</div>
<svg class="ic" style="left:256.10px;top:363.50px" width="11" height="15.2" viewBox="0 0 11 15.2"><path fill="#7a5da6" d="M0.8 0H7.4L11 3.6V14.4Q11 15.2 10.2 15.2H0.8Q0 15.2 0 14.4V0.8Q0 0 0.8 0Z"/><path fill="#fff" d="M7.4 0.6V3.6H10.4Z" opacity="0.85"/><path stroke="#fff" stroke-width="1.1" d="M2.6 7.6H8.4M2.6 9.9H8.4M2.6 12.2H8.4"/></svg>
<div class="t" style="left:282.20px;top:366.51px;font-size:10.5px;color:#444;font-weight:400">new-database-file.php</div>
<div class="t" style="left:583.60px;top:366.51px;font-size:10.5px;color:#444;font-weight:400">196 bytes</div>
<div class="t" style="left:658.60px;top:366.51px;font-size:10.5px;color:#444;font-weight:400">Jun 4, 2021, 8:19 PM</div>
<div class="t" style="left:808.60px;top:366.51px;font-size:10.5px;color:#444;font-weight:400">text/x-generic</div>
<div class="t" style="left:943.60px;top:366.51px;font-size:10.5px;color:#444;font-weight:400">0644</div>
<svg class="ic" style="left:256.10px;top:386.70px" width="11" height="15.2" viewBox="0 0 11 15.2"><path fill="#7a5da6" d="M0.8 0H7.4L11 3.6V14.4Q11 15.2 10.2 15.2H0.8Q0 15.2 0 14.4V0.8Q0 0 0.8 0Z"/><path fill="#fff" d="M7.4 0.6V3.6H10.4Z" opacity="0.85"/><path stroke="#fff" stroke-width="1.1" d="M2.6 7.6H8.4M2.6 9.9H8.4M2.6 12.2H8.4"/></svg>
<div class="t" style="left:282.20px;top:389.71px;font-size:10.5px;color:#444;font-weight:400">phpinfo.php</div>
<div class="t" style="left:583.60px;top:389.71px;font-size:10.5px;color:#444;font-weight:400">16 bytes</div>
<div class="t" style="left:658.60px;top:389.71px;font-size:10.5px;color:#444;font-weight:400">Oct 7, 2021, 12:50 PM</div>
<div class="t" style="left:808.60px;top:389.71px;font-size:10.5px;color:#444;font-weight:400">text/x-generic</div>
<div class="t" style="left:943.60px;top:389.71px;font-size:10.5px;color:#444;font-weight:400">0644</div>
<svg class="ic" style="left:256.10px;top:409.90px" width="11" height="15.2" viewBox="0 0 11 15.2"><path fill="#8c8c8c" d="M0.8 0H7.4L11 3.6V14.4Q11 15.2 10.2 15.2H0.8Q0 15.2 0 14.4V0.8Q0 0 0.8 0Z"/></svg>
<div class="a" style="left:1007px;top:151px;width:13px;height:260px;background:#f1f1f1"></div>
<svg class="ic" style="left:1011.00px;top:157.00px" width="6" height="3.5" viewBox="0 0 6 3.5"><path fill="#a3a3a3" d="M3 0L6 3.5H0Z"/></svg>
<div class="a" style="left:1009px;top:164.5px;width:10px;height:146px;background:#c1c1c1"></div>
<div class="a" style="left:251.2px;top:197.0px;width:758.6px;height:25.8px;border:2.6px solid #f01414;border-radius:2.5px"></div>
</body></html>
